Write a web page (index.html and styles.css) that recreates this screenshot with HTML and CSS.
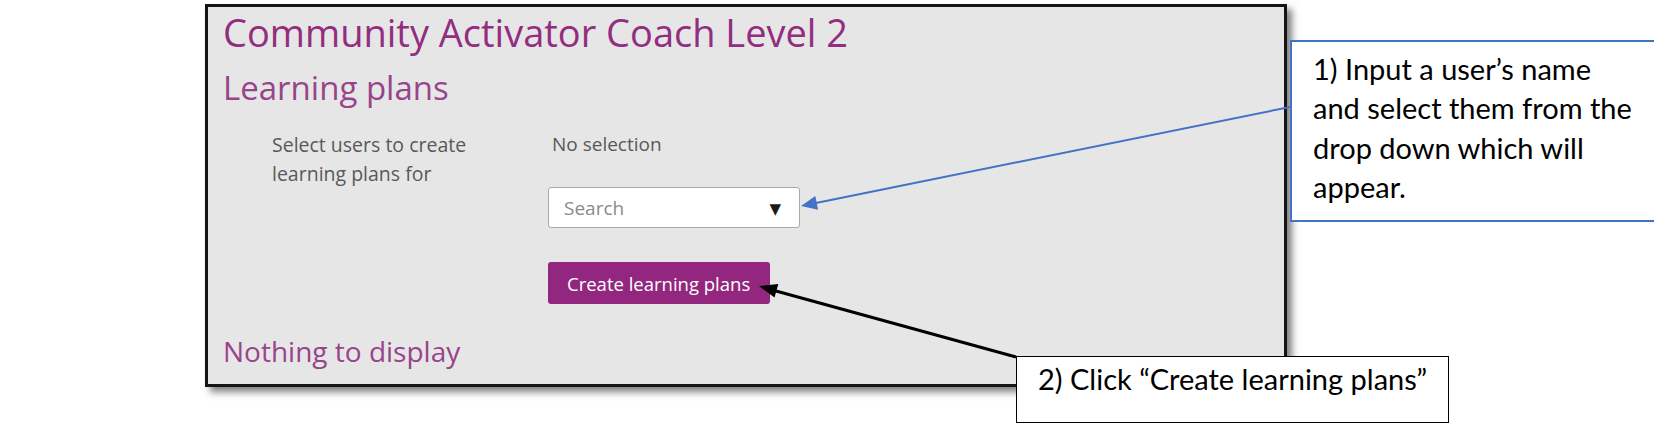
FILE: index.html
```html
<!DOCTYPE html>
<html lang="en">
<head>
<meta charset="utf-8">
<title>Community Activator Coach Level 2 - Learning plans</title>
<link rel="stylesheet" href="styles.css">
</head>
<body>
<div class="page">
  <div class="shot">
    <h1 class="title">Community Activator Coach Level 2</h1>
    <h2 class="section">Learning plans</h2>
    <div class="form-row">
      <div class="label">Select users to create<br>learning plans for</div>
      <div class="field">
        <div class="selection">No selection</div>
        <div class="select-box"><span class="placeholder">Search</span><span class="caret">&#9660;</span></div>
        <button class="btn" type="button">Create learning plans</button>
      </div>
    </div>
    <h2 class="section empty">Nothing to display</h2>
  </div>

  <svg class="arrows" width="1654" height="429" viewBox="0 0 1654 429">
    <line x1="1290" y1="107" x2="816" y2="203" stroke="#4472c4" stroke-width="2"/>
    <polygon points="801,206 818.1,209.7 815.3,195.9" fill="#4472c4"/>
    <line x1="1016" y1="357" x2="776" y2="291" stroke="#000" stroke-width="3"/>
    <polygon points="759,286 774.5,297.6 778.3,284.1" fill="#000"/>
  </svg>

  <div class="callout callout-blue">1) Input a user’s name<br>and select them from the<br>drop down which will<br>appear.</div>
  <div class="callout callout-black">2) Click “Create learning plans”</div>
</div>
</body>
</html>
```
FILE: styles.css
```css
html, body {
  margin: 0;
  padding: 0;
  background: #ffffff;
}
.page {
  position: relative;
  width: 1654px;
  height: 429px;
  overflow: hidden;
  font-family: "Open Sans", "DejaVu Sans", sans-serif;
}
.shot {
  box-sizing: border-box;
  width: 1082px;
  height: 383px;
  margin: 4px 0 0 205px;
  border: 3px solid #141414;
  background: #e6e6e6;
  padding: 0 0 0 15px;
  box-shadow: 5px 5px 7px rgba(0, 0, 0, 0.5);
}
.title {
  margin: 1px 0 0 0;
  font-size: 38px;
  line-height: 48px;
  font-weight: 400;
  color: #922d80;
}
.section {
  margin: 11px 0 0 0;
  font-size: 33px;
  line-height: 42px;
  font-weight: 400;
  color: #98448a;
}
.section.empty {
  margin-top: 29px;
  font-size: 28px;
  line-height: 36px;
}
.form-row {
  display: flex;
  margin-top: 21px;
  padding-left: 49px;
}
.label {
  width: 276px;
  font-size: 19.5px;
  line-height: 29px;
  color: #595959;
}
.field {
  display: flex;
  flex-direction: column;
  align-items: flex-start;
}
.selection {
  padding-left: 4px;
  font-size: 19px;
  line-height: 29px;
  color: #595959;
}
.select-box {
  box-sizing: border-box;
  display: flex;
  align-items: center;
  justify-content: space-between;
  width: 252px;
  height: 41px;
  margin-top: 28px;
  padding: 0 18px 0 15px;
  background: #ffffff;
  border: 1px solid #a9a9a9;
  border-radius: 3px;
}
.placeholder {
  font-size: 19px;
  color: #8a8a8a;
}
.caret {
  font-size: 15px;
  color: #1a1a1a;
}
.btn {
  box-sizing: border-box;
  height: 42px;
  margin-top: 34px;
  padding: 0 20px 0 19px;
  border: none;
  border-radius: 3px;
  background: #93277f;
  color: #ffffff;
  font-family: "Open Sans", "DejaVu Sans", sans-serif;
  font-size: 18.5px;
}
.arrows {
  position: absolute;
  left: 0;
  top: 0;
  z-index: 2;
  pointer-events: none;
}
.callout {
  position: absolute;
  z-index: 3;
  box-sizing: border-box;
  background: #ffffff;
  font-family: Lato, "Liberation Sans", sans-serif;
  font-size: 29px;
  color: #000000;
}
.callout-blue {
  left: 1290px;
  top: 40px;
  width: 420px;
  height: 182px;
  border: 2px solid #4472c4;
  padding: 7px 0 0 21px;
  line-height: 39.3px;
}
.callout-black {
  left: 1016px;
  top: 356px;
  width: 433px;
  height: 67px;
  border: 1.5px solid #000000;
  padding: 3.5px 0 0 21px;
  line-height: 36px;
}
```
